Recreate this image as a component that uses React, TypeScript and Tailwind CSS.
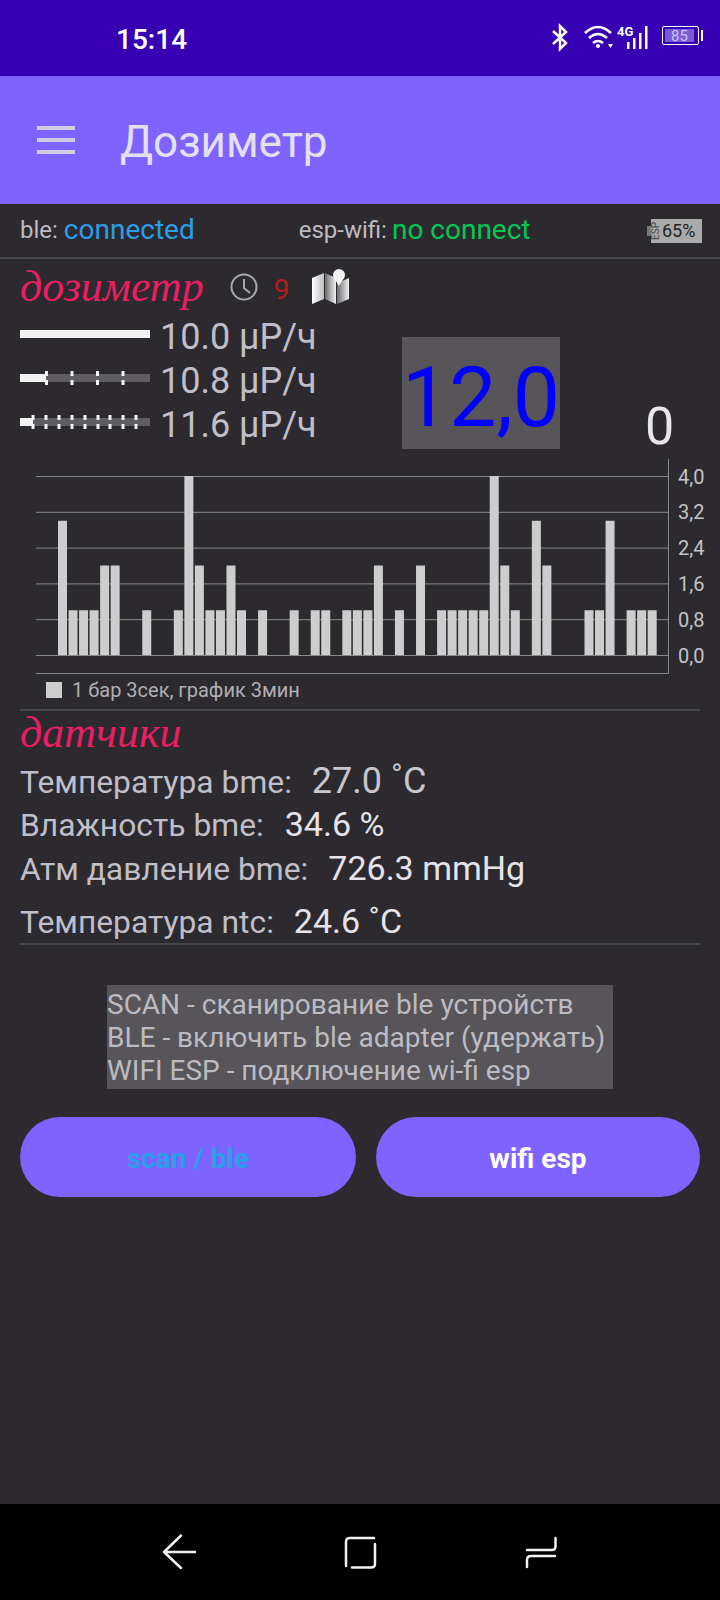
const roboto = "font-['Roboto',sans-serif]";

const bars: [number, number][] = [
  [0, 3], [1, 1], [2, 1], [3, 1], [4, 2], [5, 2], [8, 1], [11, 1], [12, 4], [13, 2], [14, 1], [15, 1], [16, 2], [17, 1],
  [19, 1], [22, 1], [24, 1], [25, 1], [27, 1], [28, 1], [29, 1], [30, 2], [32, 1], [34, 2], [36, 1], [37, 1], [38, 1],
  [39, 1], [40, 1], [41, 4], [42, 2], [43, 1], [45, 3], [46, 2], [50, 1], [51, 1], [52, 3], [54, 1], [55, 1], [56, 1],
];

const axis = ['4,0', '3,2', '2,4', '1,6', '0,8', '0,0'];

function DoseLine({ fill, dashes }: { fill: number; dashes: number[] }) {
  return (
    <svg width="130" height="14" className="shrink-0 mb-[6px]">
      <rect x="0" y="3" width="130" height="8" fill="#5f5d63" />
      <rect x="0" y="3" width={fill} height="8" fill="#f2f2f2" />
      {dashes.map((d) => (
        <g key={d} fill="#f2f2f2">
          <rect x={d - 1.5} y="0" width="3" height="5" />
          <rect x={d - 1.5} y="9" width="3" height="5" />
        </g>
      ))}
    </svg>
  );
}

function DoseRow({ fill, dashes, value }: { fill: number; dashes: number[]; value: string }) {
  return (
    <div className="flex items-center h-[44px]">
      <DoseLine fill={fill} dashes={dashes} />
      <span className="ml-[10px] text-[36px] text-[#c0bec8] whitespace-nowrap">{value}</span>
    </div>
  );
}

function Chart() {
  return (
    <svg width="720" height="215" className="block shrink-0">
      {[0, 1, 2, 3, 4, 5].map((i) => (
        <line key={i} x1="36" x2="668" y1={17.5 + i * 35.8} y2={17.5 + i * 35.8} stroke="#8a898c" strokeWidth="1" />
      ))}
      <line x1="36" x2="669" y1="214.5" y2="214.5" stroke="#8a898c" />
      <line x1="668.5" x2="668.5" y1="0" y2="215" stroke="#8a898c" />
      {bars.map(([slot, v]) => (
        <rect key={slot} x={58 + slot * 10.53} y={196 - v * 44.75} width="9" height={v * 44.75} fill="#cdcdcd" />
      ))}
      {axis.map((a, i) => (
        <text key={a} x="678" y={24.5 + i * 35.8} fontSize="20" fill="#c4c4c4" fontFamily="Roboto">
          {a}
        </text>
      ))}
    </svg>
  );
}

function SensorRow({ label, value, cls, valueCls }: { label: string; value: string; cls: string; valueCls: string }) {
  return (
    <div className={`flex items-baseline whitespace-nowrap ${cls}`}>
      <span className="text-[31.8px] text-[#c0bec8]">{label}</span>
      <span className={valueCls}>{value}</span>
    </div>
  );
}

export default function App() {
  return (
    <div className={`w-[720px] h-[1600px] flex flex-col overflow-hidden bg-[#2c2a2e] ${roboto}`}>
      {/* status bar */}
      <div className="h-[76px] shrink-0 bg-[#3700b3] flex items-center text-white">
        <span className="ml-[116px] pt-[4px] text-[28px] font-medium">15:14</span>
        <svg width="170" height="40" viewBox="550 20 170 40" className="ml-auto">
          <path d="M553 33 L566 45 L560 51 V28 L566 34 L553 46" fill="none" stroke="#fff" strokeWidth="2.5" />
          <g fill="none" stroke="#fff" strokeWidth="2.6">
            <path d="M585 35 Q598 23 611 35" />
            <path d="M589 40 Q598 32 607 40" />
            <path d="M593 45 Q598 41 603 45" />
          </g>
          <circle cx="598" cy="48" r="2" fill="#fff" />
          <path d="M608 46 h5 l-2.5 4 z" fill="#fff" />
          <text x="617" y="38" fontSize="13" fontWeight="700" fill="#fff" fontFamily="Roboto">4G</text>
          <rect x="627" y="44" width="2.5" height="7" fill="#fff" />
          <rect x="633" y="40" width="2.5" height="11" fill="#fff" />
          <rect x="639" y="35" width="2.5" height="16" fill="#fff" />
          <rect x="645" y="28" width="2.5" height="23" fill="#fff" />
          <rect x="662.5" y="28.5" width="36" height="18" rx="1.5" fill="none" stroke="#fff" />
          <rect x="665" y="31" width="29" height="13" fill="#7a5cd8" />
          <rect x="701" y="32" width="2" height="11" fill="#fff" />
          <text x="671" y="43" fontSize="15" fill="#cbbcf5" fontFamily="Roboto">85</text>
        </svg>
      </div>

      {/* toolbar */}
      <div className="h-[128px] shrink-0 bg-[#7f63ff] flex items-center">
        <div className="ml-[37px] w-[38px] flex flex-col gap-[8px]">
          <div className="h-[4px] bg-[#cfcbe0]" />
          <div className="h-[4px] bg-[#cfcbe0]" />
          <div className="h-[4px] bg-[#cfcbe0]" />
        </div>
        <span className="ml-[45px] pt-[3px] text-[44px] text-[#e3e0ef]">Дозиметр</span>
      </div>

      {/* connection row */}
      <div className="h-[53px] shrink-0 flex items-center pl-[20px] pr-[18px] whitespace-nowrap">
        <span className="pb-[2px] text-[24px] text-[#bdbbc2]">ble: </span>
        <span className="pb-[2px] ml-[6px] text-[28px] text-[#2b9de9]">connected</span>
        <span className="pb-[2px] ml-[104px] text-[24px] text-[#bdbbc2]">esp-wifi: </span>
        <span className="pb-[2px] ml-[5px] text-[28px] text-[#00c853]">no connect</span>
        <div className="ml-auto flex items-center">
          <div className="w-[4px] h-[10px] bg-[#777]" />
          <div className="w-[51px] h-[24px] bg-[#aaaaaa] flex items-center overflow-hidden">
            <span className="w-[11px] shrink-0 flex justify-center text-[10px] leading-none text-[#444] [writing-mode:vertical-rl] rotate-180">ESP</span>
            <span className="text-[18px] text-[#222]">65%</span>
          </div>
        </div>
      </div>
      <div className="h-[2px] shrink-0 bg-[#47464c]" />

      {/* dose block */}
      <div className="h-[200px] shrink-0 flex pl-[20px]">
        <div className="w-[382px] shrink-0">
          <div className="h-[56px] flex items-center">
            <span className="font-['Liberation_Serif',serif] italic text-[44px] text-[#e91e63]">дозиметр</span>
            <svg width="30" height="30" viewBox="0 0 30 30" className="ml-[25px]">
              <circle cx="15" cy="15" r="12.5" fill="none" stroke="#a8a8a8" strokeWidth="2" />
              <path d="M15 7 V16 L21 21" fill="none" stroke="#a8a8a8" strokeWidth="2" />
            </svg>
            <span className="ml-[15px] pt-[6px] text-[28px] text-[#b71c1c]">9</span>
            <svg width="38" height="36" viewBox="0 0 38 36" className="ml-[23px]">
              <defs>
                <linearGradient id="mapFold" x1="0" x2="1" y1="0" y2="0">
                  <stop offset="0" stopColor="#6a696d" />
                  <stop offset="1" stopColor="#f2f2f2" />
                </linearGradient>
                <linearGradient id="mapLeft" x1="0" x2="1" y1="0" y2="0">
                  <stop offset="0" stopColor="#ffffff" />
                  <stop offset="1" stopColor="#bdbdbd" />
                </linearGradient>
              </defs>
              <path d="M0 9 L12 4 V30 L0 35 Z" fill="url(#mapLeft)" />
              <path d="M13 4 L24 9 V35 L13 30 Z" fill="url(#mapFold)" />
              <path d="M25 14 L37 9 V30 L25 35 Z" fill="url(#mapFold)" />
              <circle cx="27" cy="6" r="6" fill="#f2f2f2" />
              <path d="M21.5 8 L27 17 L32.5 8 Z" fill="#f2f2f2" />
            </svg>
          </div>
          <DoseRow fill={130} dashes={[]} value="10.0 μP/ч" />
          <DoseRow fill={26} dashes={[26.5, 52, 77.5, 103]} value="10.8 μP/ч" />
          <DoseRow fill={13} dashes={[13, 26, 39, 52, 65, 78, 90, 103, 116]} value="11.6 μP/ч" />
        </div>
        <div className="mt-[78px] w-[158px] h-[112px] shrink-0 bg-[#575559] flex items-center justify-center">
          <span className="pt-[10px] text-[84px] leading-none text-[#0000ff]">12,0</span>
        </div>
        <span className="ml-[85px] mt-[138px] h-[60px] text-[52px] leading-[60px] text-[#e8e6ec]">0</span>
      </div>

      {/* chart */}
      <Chart />

      {/* legend */}
      <div className="h-[35px] shrink-0 flex items-center pl-[46px] pb-[3px]">
        <div className="w-[16px] h-[16px] bg-[#cdcdcd]" />
        <span className="ml-[10px] text-[20px] text-[#b0afb3]">1 бар 3сек, график 3мин</span>
      </div>
      <div className="h-[2px] shrink-0 mx-[20px] bg-[#47464c]" />

      {/* sensors */}
      <div className="h-[232px] shrink-0 pl-[20px]">
        <div className="h-[43px] flex items-center">
          <span className="font-['Liberation_Serif',serif] italic text-[44px] text-[#e91e63]">датчики</span>
        </div>
        <SensorRow label="Температура bme:" value="27.0 ˚C" cls="h-[45px]" valueCls="ml-[20px] text-[36px] text-[#c8c6ce]" />
        <SensorRow label="Влажность bme:" value="34.6 %" cls="h-[44px]" valueCls="ml-[21px] text-[34px] text-[#e6e4ea]" />
        <SensorRow label="Атм давление bme:" value="726.3 mmHg" cls="h-[53px]" valueCls="ml-[20px] text-[34px] text-[#e6e4ea]" />
        <SensorRow label="Температура ntc:" value="24.6 ˚C" cls="h-[44px]" valueCls="ml-[20px] text-[34px] text-[#e6e4ea]" />
      </div>
      <div className="h-[2px] shrink-0 mx-[20px] bg-[#47464c]" />

      {/* hint */}
      <div className="ml-[107px] mt-[40px] w-[506px] h-[104px] shrink-0 bg-[#575559] text-[28px] leading-[33px] text-[#bdbbc2] whitespace-nowrap pt-[3px]">
        <div>SCAN - сканирование ble устройств</div>
        <div>BLE - включить ble adapter (удержать)</div>
        <div>WIFI ESP - подключение wi-fi esp</div>
      </div>

      {/* buttons */}
      <div className="mt-[28px] h-[80px] shrink-0 flex gap-[20px] px-[20px] text-[28px] font-bold">
        <div className="w-[336px] pt-[3px] rounded-[40px] bg-[#7f63ff] flex items-center justify-center text-[#2b9de9]">scan / ble</div>
        <div className="w-[324px] pt-[3px] rounded-[40px] bg-[#7f63ff] flex items-center justify-center text-white">wifi esp</div>
      </div>

      <div className="flex-1" />

      {/* nav bar */}
      <div className="h-[96px] shrink-0 bg-black">
        <svg width="720" height="96" viewBox="0 1504 720 96" fill="none" stroke="#f2f2f2" strokeWidth="2.5" strokeLinecap="round" strokeLinejoin="round">
          <path d="M181 1535.5 L164 1552 L181 1568 M165 1552 H195" />
          <path d="M346 1566 V1542 Q346 1538 350 1538 H374" />
          <path d="M352 1567.5 H371 Q375 1567.5 375 1564 V1544" />
          <path d="M527 1550 H552 Q555.5 1550 555.5 1546 V1538" />
          <path d="M555 1556 H531 Q527 1556 527 1560 V1567" />
        </svg>
      </div>
    </div>
  );
}
